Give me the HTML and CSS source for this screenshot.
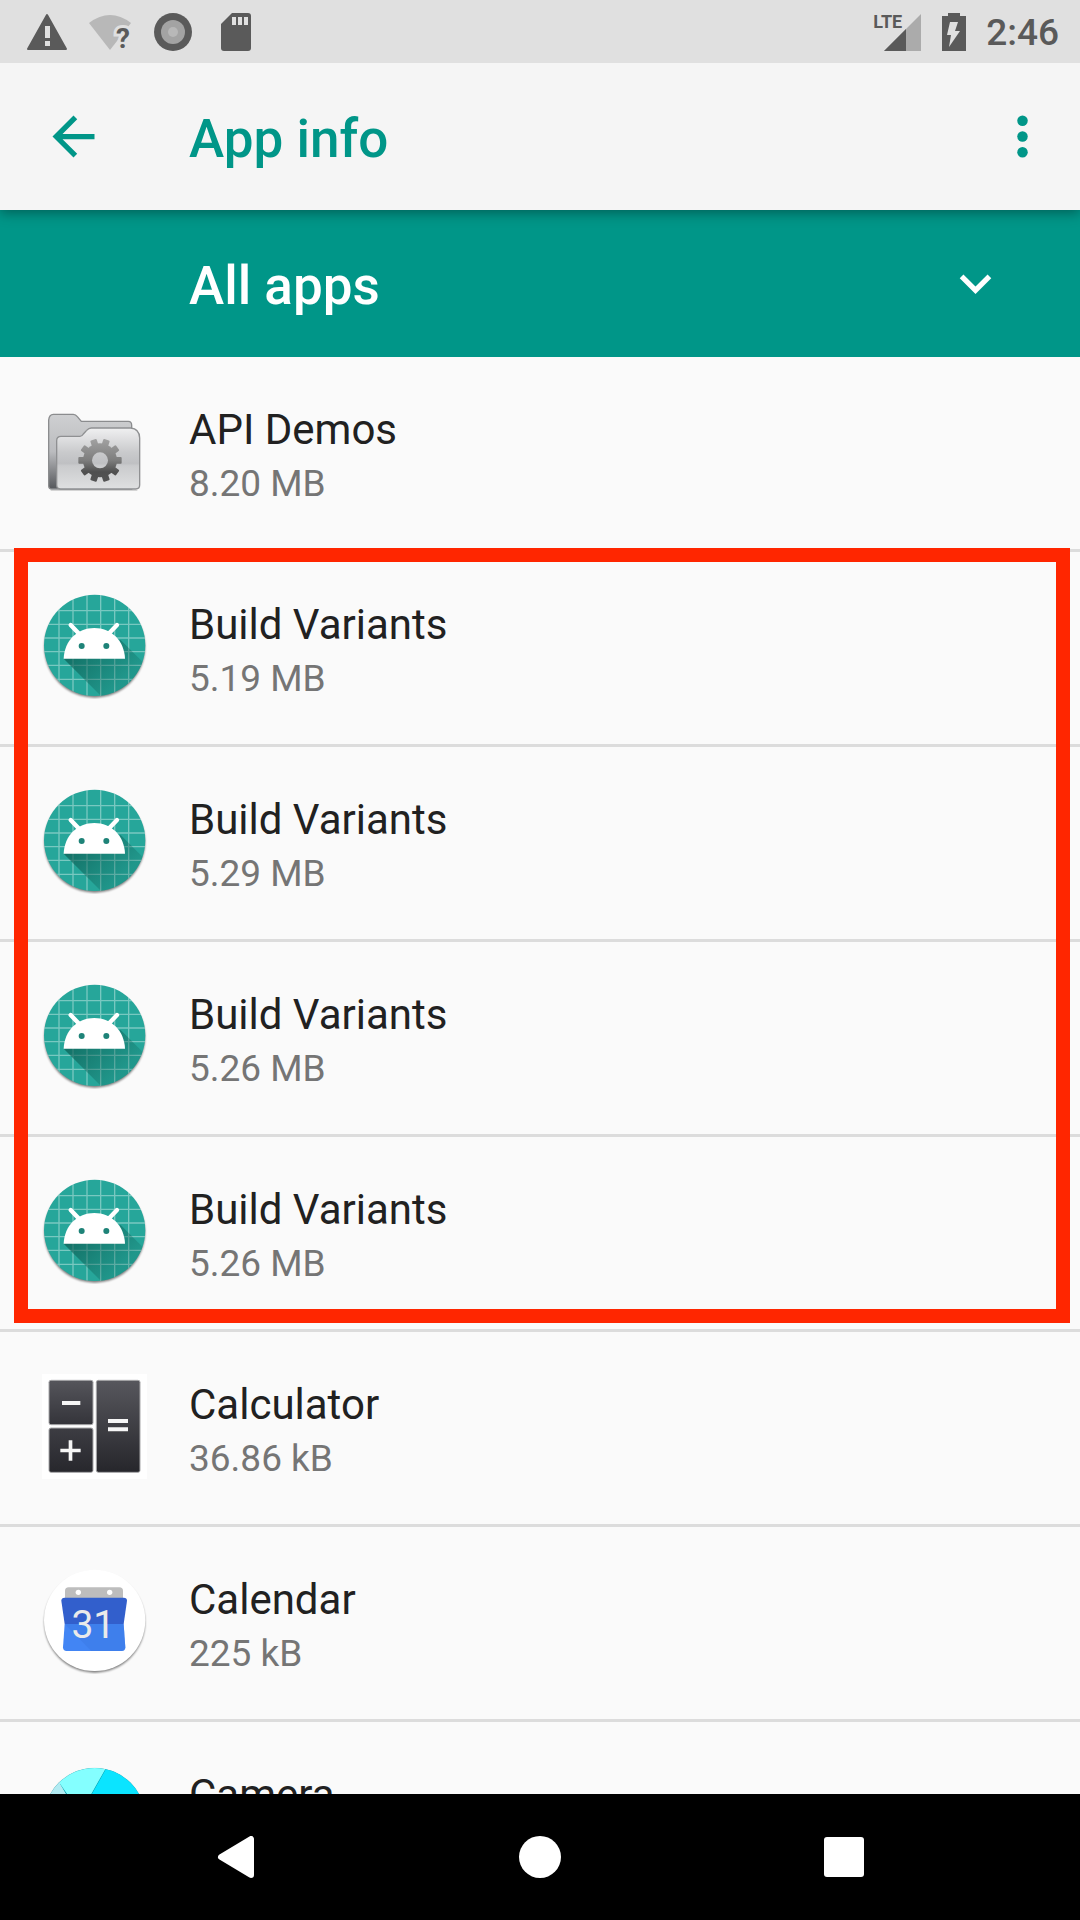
FILE: index.html
```html
<!DOCTYPE html>
<html lang="en">
<head>
<meta charset="utf-8">
<meta name="viewport" content="width=device-width, initial-scale=1">
<title>App info</title>
<link rel="stylesheet" href="styles.css">
</head>
<body>
<svg class="sprite" aria-hidden="true">
  <defs>
    <linearGradient id="droid-shade" gradientUnits="userSpaceOnUse" x1="150" y1="190" x2="270" y2="310">
      <stop offset="0" stop-color="#0b5a50" stop-opacity=".7"/>
      <stop offset="1" stop-color="#0b5a50" stop-opacity=".2"/>
    </linearGradient>
    <clipPath id="droid-clip"><circle cx="194" cy="196" r="152"/></clipPath>
    <filter id="soft" x="-10%" y="-10%" width="120%" height="120%"><feGaussianBlur stdDeviation="3"/></filter>
    <symbol id="droid" viewBox="36 42 315 315">
      <circle cx="194" cy="202" r="151" fill="#000" opacity=".5" filter="url(#soft)"/>
      <circle cx="194" cy="196" r="152" fill="#26a69a"/>
      <g clip-path="url(#droid-clip)">
        <path d="M87 40V350M129 40V350M171 40V350M212 40V350M254 40V350M296 40V350M40 92H350M40 133H350M40 174H350M40 215H350M40 256H350M40 298H350" stroke="#fff" stroke-opacity=".38" stroke-width="4"/>
        <path d="M101 236L215 350H350V258L272 180Z" fill="url(#droid-shade)"/>
      </g>
      <path d="M101 236C103 182 142 144 193 144S283 182 285 236Z" fill="#fff"/>
      <path d="M122 135L145 159M261 135L238 159" stroke="#fff" stroke-width="13" stroke-linecap="round"/>
      <circle cx="155" cy="198" r="9" fill="#1e8378"/>
      <circle cx="229" cy="198" r="9" fill="#1e8378"/>
    </symbol>
  </defs>
</svg>

<div class="screen">
  <div class="status">
    <div class="status-group status-left">
      <svg class="status-icon" viewBox="0 0 42 42" role="img" aria-label="Warning">
        <path d="M21 4L40 38H2Z" fill="#5a5a5a" stroke="#5a5a5a" stroke-width="2" stroke-linejoin="round"/>
        <path d="M19 15h5v12h-5zM19 30h5v5h-5z" fill="#e0e0e0"/>
      </svg>
      <svg class="status-icon" viewBox="0 0 42 42" role="img" aria-label="Wi-Fi without internet">
        <path d="M0 12Q21 -4 42 12L21 39Z" fill="#b8b8b8"/>
        <text class="wifi-mark" x="34" y="37">?</text>
      </svg>
      <svg class="status-icon" viewBox="0 0 42 42" role="img" aria-label="Recording">
        <circle cx="21" cy="21" r="19" fill="#5a5a5a"/>
        <circle cx="21" cy="21" r="12" fill="#a3a3a3"/>
        <circle cx="21" cy="21" r="5" fill="#b8b8b8"/>
      </svg>
      <svg class="status-icon" viewBox="0 0 42 42" role="img" aria-label="SD card">
        <path d="M17 2H33Q36 2 36 5V37Q36 40 33 40H9Q6 40 6 37V13Z" fill="#5a5a5a"/>
        <path d="M17 6h4v8h-4zM23 6h4v8h-4zM29 6h4v8h-4z" fill="#e0e0e0"/>
      </svg>
    </div>
    <div class="status-group status-right">
      <div class="signal">
        <span class="signal-type">LTE</span>
        <svg viewBox="0 0 47 42" role="img" aria-label="Signal">
          <path d="M46 3V40H9Z" fill="#ababab"/>
          <path d="M31 18V40H9Z" fill="#5a5a5a"/>
        </svg>
      </div>
      <svg class="battery" viewBox="0 0 24 42" role="img" aria-label="Charging">
        <path d="M0 5H6V2H18V5H24V40H0Z" fill="#5a5a5a"/>
        <path d="M8 11H16L13 20H18L7 36L9 24H5Z" fill="#e0e0e0"/>
      </svg>
      <time class="clock">2:46</time>
    </div>
  </div>

  <header class="toolbar">
    <button class="icon-button" type="button" aria-label="Back">
      <svg viewBox="0 0 24 24"><path d="M20 11H7.83l5.59-5.59L12 4l-8 8 8 8 1.41-1.41L7.83 13H20v-2z"/></svg>
    </button>
    <h1 class="title">App info</h1>
    <button class="icon-button" type="button" aria-label="More options">
      <svg viewBox="0 0 24 24"><circle cx="12" cy="6" r="2"/><circle cx="12" cy="12" r="2"/><circle cx="12" cy="18" r="2"/></svg>
    </button>
  </header>

  <div class="filter">
    <select class="filter-select" aria-label="Filter apps">
      <option>All apps</option>
    </select>
    <svg class="filter-arrow" viewBox="0 0 24 24" aria-hidden="true"><path d="M16.59 8.59L12 13.17 7.41 8.59 6 10l6 6 6-6z"/></svg>
  </div>

  <main class="apps">
    <a class="app" href="#api-demos">
      <svg class="app-icon" viewBox="36 27 315 315" aria-hidden="true">
        <defs>
          <linearGradient id="folder-back" x1="0" y1="0" x2="0" y2="1">
            <stop offset="0" stop-color="#cfd0d2"/><stop offset=".5" stop-color="#bbbcbf"/><stop offset="1" stop-color="#55575b"/>
          </linearGradient>
          <linearGradient id="folder-front" x1="0" y1="0" x2="0" y2="1">
            <stop offset="0" stop-color="#f0f0f1"/><stop offset=".4" stop-color="#c9cacc"/><stop offset=".58" stop-color="#bfc0c3"/><stop offset=".62" stop-color="#cacbcd"/><stop offset="1" stop-color="#dfe0e1"/>
          </linearGradient>
          <linearGradient id="gear-fill" x1="0" y1="0" x2="0" y2="1">
            <stop offset="0" stop-color="#a5a5a5"/><stop offset=".5" stop-color="#7d7d7d"/><stop offset=".75" stop-color="#4f4f4f"/><stop offset="1" stop-color="#555"/>
          </linearGradient>
          <mask id="gear-mask">
            <g fill="#fff">
              <circle cx="210" cy="211" r="51"/>
              <rect x="145" y="201" width="130" height="20" rx="3"/>
              <rect x="145" y="201" width="130" height="20" rx="3" transform="rotate(36 210 211)"/>
              <rect x="145" y="201" width="130" height="20" rx="3" transform="rotate(72 210 211)"/>
              <rect x="145" y="201" width="130" height="20" rx="3" transform="rotate(108 210 211)"/>
              <rect x="145" y="201" width="130" height="20" rx="3" transform="rotate(144 210 211)"/>
            </g>
            <circle cx="210" cy="211" r="24" fill="#000"/>
          </mask>
        </defs>
        <path d="M62 301H322" stroke="#000" stroke-opacity=".15" stroke-width="4"/>
        <path d="M56 90Q58 73 70 73H130Q137 73 142 80L154 94H295Q305 94 305 106V297H66Q56 297 56 287Z" fill="url(#folder-back)" stroke="#8b8c8e" stroke-width="4"/>
        <path d="M80 152Q80 139 93 139H150Q156 139 160 132L170 121Q176 114 184 114H302Q328 116 329 144V285Q329 297 317 297H92Q80 297 80 285Z" fill="url(#folder-front)" stroke="#8f9092" stroke-width="4"/>
        <rect x="140" y="141" width="140" height="140" fill="url(#gear-fill)" mask="url(#gear-mask)"/>
      </svg>
      <span class="app-text"><span class="app-name">API Demos</span><span class="app-size">8.20 MB</span></span>
    </a>
    <section class="highlight" aria-label="Build Variants">
      <a class="app" href="#build-variants-1">
        <svg class="app-icon" aria-hidden="true"><use href="#droid"/></svg>
        <span class="app-text"><span class="app-name">Build Variants</span><span class="app-size">5.19 MB</span></span>
      </a>
      <a class="app" href="#build-variants-2">
        <svg class="app-icon" aria-hidden="true"><use href="#droid"/></svg>
        <span class="app-text"><span class="app-name">Build Variants</span><span class="app-size">5.29 MB</span></span>
      </a>
      <a class="app" href="#build-variants-3">
        <svg class="app-icon" aria-hidden="true"><use href="#droid"/></svg>
        <span class="app-text"><span class="app-name">Build Variants</span><span class="app-size">5.26 MB</span></span>
      </a>
      <a class="app" href="#build-variants-4">
        <svg class="app-icon" aria-hidden="true"><use href="#droid"/></svg>
        <span class="app-text"><span class="app-name">Build Variants</span><span class="app-size">5.26 MB</span></span>
      </a>
    </section>
    <a class="app" href="#calculator">
      <svg class="app-icon" viewBox="36 42 315 315" aria-hidden="true">
        <defs>
          <linearGradient id="key" x1="0" y1="0" x2="0" y2="1">
            <stop offset="0" stop-color="#55555b"/><stop offset="1" stop-color="#34343a"/>
          </linearGradient>
          <linearGradient id="key-low" x1="0" y1="0" x2="0" y2="1">
            <stop offset="0" stop-color="#3d3d43"/><stop offset="1" stop-color="#27272c"/>
          </linearGradient>
          <linearGradient id="key-tall" x1="0" y1="0" x2="0" y2="1">
            <stop offset="0" stop-color="#57575d"/><stop offset="1" stop-color="#26262b"/>
          </linearGradient>
        </defs>
        <path d="M36 42H351V357H36Z" fill="#fff"/>
        <g stroke="#a8a8aa" stroke-width="3">
          <rect x="57" y="61" width="132" height="133" rx="6" fill="url(#key)"/>
          <rect x="57" y="204" width="132" height="133" rx="6" fill="url(#key-low)"/>
          <rect x="199" y="61" width="131" height="276" rx="6" fill="url(#key-tall)"/>
        </g>
        <path d="M96 123h55v12H96zM234 177h60v12h-60zM234 202h60v12h-60zM91 266h61v11H91zM116 241h11v61h-11z" fill="#f6f6f6"/>
      </svg>
      <span class="app-text"><span class="app-name">Calculator</span><span class="app-size">36.86 kB</span></span>
    </a>
    <a class="app" href="#calendar">
      <svg class="app-icon" viewBox="36 27 315 315" aria-hidden="true">
        <circle cx="194" cy="187" r="151" fill="#000" opacity=".5" filter="url(#soft)"/>
        <circle cx="194" cy="181" r="152" fill="#fff"/>
        <path d="M105 116V93Q105 82 116 82H268Q279 82 279 93V116Z" fill="#bdbdbd"/>
        <circle cx="145" cy="97" r="8" fill="#fff"/>
        <circle cx="239" cy="97" r="8" fill="#fff"/>
        <path d="M104 192H281L286 262Q286 273 275 273H110Q99 273 99 262Z" fill="#4285f4"/>
        <path d="M104 192L184 273H275Q286 273 286 262L281 192Z" fill="#3a76e2" opacity=".4"/>
        <path d="M94 122Q94 113 104 113H281Q291 113 291 122L281 192H104Z" fill="#325fcc"/>
        <text class="calendar-day" x="190" y="235">31</text>
      </svg>
      <span class="app-text"><span class="app-name">Calendar</span><span class="app-size">225 kB</span></span>
    </a>
    <a class="app" href="#camera">
      <svg class="app-icon" viewBox="126 192 315 315" aria-hidden="true">
        <defs><clipPath id="lens"><circle cx="284" cy="356" r="152"/></clipPath></defs>
        <circle cx="284" cy="356" r="153" fill="#d0d8d8"/>
        <g clip-path="url(#lens)">
          <path d="M120 200H440V510H120Z" fill="#0097a7"/>
          <path d="M120 200H180V251L232 340H120Z" fill="#b2ebf2"/>
          <path d="M180 251V190H326L241 340Z" fill="#84ffff"/>
          <path d="M316 210L326 190H450V360H232Z" fill="#0be4ff"/>
        </g>
      </svg>
      <span class="app-text"><span class="app-name">Camera</span></span>
    </a>
  </main>

  <nav class="navbar" aria-label="System">
    <button class="nav-button" type="button" aria-label="Back">
      <svg viewBox="0 0 42 42"><path d="M36 3V39L6 21Z" stroke="#fff" stroke-width="6" stroke-linejoin="round"/></svg>
    </button>
    <button class="nav-button" type="button" aria-label="Home">
      <svg viewBox="0 0 42 42"><circle cx="21" cy="21" r="21"/></svg>
    </button>
    <button class="nav-button" type="button" aria-label="Recent apps">
      <svg viewBox="0 0 42 42"><rect x="1" y="1" width="40" height="40" rx="3"/></svg>
    </button>
  </nav>
</div>
</body>
</html>
```

FILE: styles.css
```css
* {
  box-sizing: border-box;
}

body {
  margin: 0;
  background: #fafafa;
  color: #212121;
  font-family: Roboto, "Liberation Sans", sans-serif;
}

button {
  padding: 0;
  border: 0;
  background: none;
  cursor: pointer;
}

svg {
  display: block;
}

.sprite {
  position: absolute;
  width: 0;
  height: 0;
}

.screen {
  display: flex;
  flex-direction: column;
  height: 100vh;
}

/* Status bar */
.status {
  display: flex;
  flex: none;
  justify-content: space-between;
  align-items: center;
  height: 63px;
  padding: 0 21px 0 26px;
  background: #e0e0e0;
  color: #5a5a5a;
}

.status-group {
  display: flex;
  align-items: center;
}

.status-left {
  gap: 21px;
}

.status-right {
  gap: 20px;
}

.status-icon {
  width: 42px;
  height: 42px;
  overflow: visible;
}

.wifi-mark {
  fill: #5a5a5a;
  stroke: #e0e0e0;
  stroke-width: 6px;
  paint-order: stroke;
  font-size: 28px;
  font-weight: 700;
  text-anchor: middle;
}

.signal {
  position: relative;
  width: 47px;
  height: 42px;
}

.signal-type {
  position: absolute;
  top: 3px;
  left: -2px;
  font-size: 18px;
  font-weight: 700;
  line-height: 16px;
}

.battery {
  width: 24px;
  height: 42px;
}

.clock {
  padding-top: 3px;
  font-size: 37px;
  font-weight: 500;
  line-height: 42px;
}

/* Toolbar */
.toolbar {
  position: relative;
  z-index: 1;
  display: flex;
  flex: none;
  align-items: center;
  height: 147px;
  padding: 0 26px 0 42px;
  background: #f5f5f5;
  box-shadow: 0 3px 12px rgba(0, 0, 0, 0.36);
  clip-path: inset(0 0 -24px);
  color: #009688;
}

.icon-button {
  width: 63px;
  height: 63px;
  color: inherit;
}

.icon-button svg {
  width: 63px;
  height: 63px;
  fill: currentColor;
}

.title {
  flex: 1;
  margin: 0;
  padding: 5px 0 0 84px;
  font-size: 53px;
  font-weight: 500;
  line-height: 60px;
}

/* Filter */
.filter {
  position: relative;
  flex: none;
  height: 147px;
  background: #009688;
}

.filter-select {
  width: 100%;
  height: 100%;
  margin: 0;
  padding: 5px 136px 0 189px;
  border: 0;
  border-radius: 0;
  appearance: none;
  background: transparent;
  color: #fff;
  font-family: inherit;
  font-size: 53px;
  font-weight: 500;
}

.filter-arrow {
  position: absolute;
  top: 42px;
  right: 73px;
  width: 63px;
  height: 63px;
  fill: #fff;
  pointer-events: none;
}

/* App list */
.apps {
  flex: 1;
  min-height: 0;
  overflow-y: auto;
  scrollbar-width: none;
}

.app {
  display: flex;
  align-items: flex-start;
  gap: 42px;
  height: 195px;
  padding: 42px 42px 0;
  border-bottom: 3px solid #dcdcdc;
  color: inherit;
  text-decoration: none;
}

.app-icon {
  flex: none;
  width: 105px;
  height: 105px;
}

.app-text {
  display: flex;
  flex-direction: column;
}

.app-name {
  font-size: 42px;
  line-height: 61px;
}

.app-size {
  color: #757575;
  font-size: 37px;
  line-height: 48px;
}

.calendar-day {
  fill: #eaeaea;
  font-size: 117px;
  font-weight: 400;
  text-anchor: middle;
}

/* Red frame drawn over the matching apps */
.highlight {
  position: relative;
}

.highlight::after {
  content: "";
  position: absolute;
  inset: -4px 10px 9px 14px;
  border: 14px solid #ff2600;
  pointer-events: none;
}

/* Navigation bar */
.navbar {
  display: grid;
  grid-template-columns: repeat(3, 1fr);
  flex: none;
  height: 126px;
  padding: 0 84px;
  background: #000;
}

.nav-button {
  display: flex;
  justify-content: center;
  align-items: center;
}

.nav-button svg {
  width: 42px;
  height: 42px;
  fill: #fff;
}
```
